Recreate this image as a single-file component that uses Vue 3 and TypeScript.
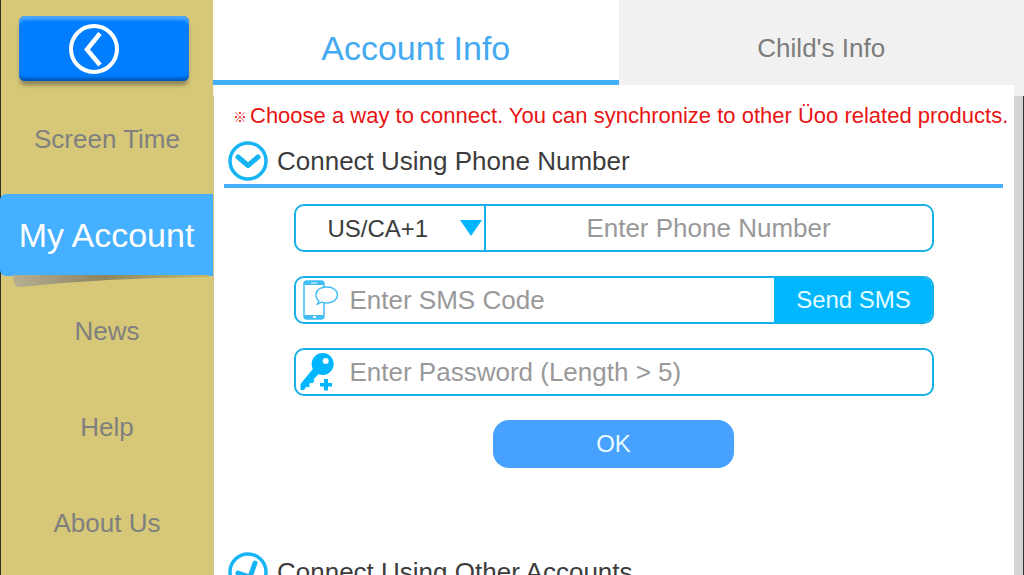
<script setup lang="ts">
import { ref } from 'vue'

const menu: string[] = ['Screen Time', 'My Account', 'News', 'Help', 'About Us']
const activeMenu = ref('My Account')

const tabs: string[] = ['Account Info', "Child's Info"]
const activeTab = ref('Account Info')

const country = ref('US/CA+1')
const phone = ref('')
const smsCode = ref('')
const password = ref('')
</script>

<template>
  <div class="app">
    <aside class="sidebar">
      <div class="back-row">
        <button class="back" type="button" aria-label="Back">
          <svg width="50" height="50" viewBox="0 0 50 50" fill="none" stroke="#fff">
            <circle cx="25" cy="25" r="23" stroke-width="4" />
            <path d="M31 9.500L18 25.500L31 41" stroke-width="4.500" />
          </svg>
        </button>
      </div>
      <nav class="menu">
        <button
          v-for="item in menu"
          :key="item"
          type="button"
          class="menu-item"
          :class="{ active: item === activeMenu }"
          @click="activeMenu = item"
        >
          <span class="menu-label">{{ item }}</span>
          <svg v-if="item === activeMenu" class="fold" viewBox="0 0 200 14" preserveAspectRatio="none">
            <defs>
              <linearGradient id="fold" x1="0" x2="1" y1="0" y2="0">
                <stop offset="0" stop-color="#b5ae90" />
                <stop offset="0.2" stop-color="#a39c7e" />
                <stop offset="0.45" stop-color="#8d8560" />
                <stop offset="1" stop-color="#c4b86f" />
              </linearGradient>
            </defs>
            <path d="M0 0H198L197 2Q90 3 8 12Q2 12 1 8Z" fill="url(#fold)" />
          </svg>
        </button>
      </nav>
    </aside>

    <main class="main">
      <header class="tabs">
        <button
          v-for="tab in tabs"
          :key="tab"
          type="button"
          class="tab"
          :class="{ active: tab === activeTab }"
          @click="activeTab = tab"
        >
          {{ tab }}
        </button>
      </header>

      <div class="body">
        <section class="sheet">
          <p class="notice"><span class="mark">※</span>Choose a way to connect. You can synchronize to other Üoo related products.</p>

          <h2 class="heading open">
            <svg width="40" height="40" viewBox="0 0 40 40" fill="none" stroke="#17b4f4">
              <circle cx="20" cy="20" r="18" stroke-width="3.500" />
              <path d="M10 16L20 24.500L30 16" stroke-width="5" stroke-linecap="round" stroke-linejoin="round" />
            </svg>
            Connect Using Phone Number
          </h2>

          <form class="form" @submit.prevent>
            <div class="field">
              <label class="country">
                <select v-model="country" aria-label="Country code">
                  <option>US/CA+1</option>
                </select>
                <svg class="caret" width="22" height="16" viewBox="0 0 22 16">
                  <path d="M0 0H22L11 16Z" fill="#00b7ff" />
                </svg>
              </label>
              <input v-model="phone" class="phone" type="tel" placeholder="Enter Phone Number" aria-label="Phone number" />
            </div>

            <div class="field">
              <label class="icon" for="sms">
                <svg width="40" height="40" viewBox="0 0 40 40">
                  <rect x="4" y="1" width="20" height="38" rx="3" fill="#fff" stroke="#42bdf5" stroke-width="1.500" />
                  <path d="M4 5V4Q4 1 7 1H21Q24 1 24 4V5Z" fill="#42bdf5" />
                  <path d="M4 35H24V36Q24 39 21 39H7Q4 39 4 36Z" fill="#42bdf5" />
                  <path d="M11 3H17" stroke="#fff" stroke-width="1" />
                  <rect x="13" y="36" width="3" height="2" fill="#fff" />
                  <path d="M19 21Q15.500 18 16 14C17 9 22 7 27 7C33 7 37.500 10.500 37.500 15C37.500 20 32 23 26.500 23Q24 23 21.500 22.200L17 24.500Z" fill="#fff" stroke="#42bdf5" stroke-width="1.400" stroke-linejoin="round" />
                </svg>
              </label>
              <input id="sms" v-model="smsCode" type="text" placeholder="Enter SMS Code" />
              <button class="send" type="button">Send SMS</button>
            </div>

            <div class="field">
              <label class="icon" for="password">
                <svg width="40" height="40" viewBox="0 0 40 40" fill="#00b7ff">
                  <path fill-rule="evenodd" d="M22.700 1A11 11 0 1 1 18.500 22.200L13.500 27.500L14.500 29L12 31.500L10.500 30.500L9 32.500L10 34L8 35.500L6.500 34.500L4 38H0.500V32L12.800 17A11 11 0 0 1 22.700 1ZM25.700 6A3 3 0 1 0 25.700 12A3 3 0 1 0 25.700 6Z" />
                  <path d="M24 27H28V31H32V34.500H28V38.500H24V34.500H20V31H24Z" />
                </svg>
              </label>
              <input id="password" v-model="password" type="password" placeholder="Enter Password (Length &gt; 5)" />
            </div>

            <button class="ok" type="submit">OK</button>
          </form>

          <h2 class="heading">
            <svg width="40" height="40" viewBox="0 0 40 40" fill="none" stroke="#17b4f4">
              <circle cx="20" cy="20" r="18" stroke-width="3.500" />
              <path d="M10 21L22 25L27 11" stroke-width="5" stroke-linecap="round" stroke-linejoin="round" />
            </svg>
            Connect Using Other Accounts
          </h2>
        </section>
      </div>
    </main>
  </div>
</template>

<style>
body {
  margin: 0;
}
</style>

<style scoped>
.app {
  display: flex;
  height: 100vh;
  overflow: hidden;
  background: #fff;
  font-family: 'Liberation Sans', Arial, sans-serif;
}
button,
input,
select {
  margin: 0;
  padding: 0;
  border: 0;
  background: none;
  font: inherit;
  color: inherit;
  box-sizing: border-box;
}
svg {
  display: block;
}
.sidebar {
  flex: 0 0 213px;
  box-sizing: border-box;
  border-left: 1px solid #33301c;
  background: #d6c878;
}
.back-row {
  height: 91px;
  box-sizing: border-box;
  padding: 16px 24px 0 18px;
}
.back {
  display: flex;
  align-items: center;
  width: 100%;
  height: 65px;
  padding: 0 0 0 50px;
  border-radius: 6px;
  background: #007eff;
  box-shadow:
    inset 0 4px 3px #4aa5fa,
    inset 0 -3px 3px #0058b8,
    inset 0 0 3px #0065cc,
    0 5px 4px -1px #8b8258;
}
.menu {
  display: flex;
  flex-direction: column;
}
.menu-item {
  position: relative;
  display: flex;
  align-items: center;
  height: 96px;
  font-size: 26px;
  color: #808080;
}
.menu-label {
  flex: 1;
  text-align: center;
}
.menu-item.active {
  margin-left: -1px;
  font-size: 34px;
  color: #fff;
}
.active .menu-label {
  line-height: 82px;
  border-radius: 6px 0 0 6px;
  background: #44b0ff;
}
.fold {
  position: absolute;
  left: 13px;
  top: 88px;
  width: 198px;
  height: 14px;
}
.main {
  flex: 1;
  min-width: 0;
  display: flex;
  flex-direction: column;
}
.tabs {
  display: flex;
  flex: 0 0 96px;
  background: #f1f1f1;
}
.tab {
  flex: 1;
  height: 96px;
  font-size: 26px;
  color: #7c7c7c;
}
.tab.active {
  height: 85px;
  padding-top: 16px;
  border-bottom: 5px solid #44b0f9;
  background: #fff;
  font-size: 34px;
  color: #44aaf0;
}
.body {
  flex: 1;
  min-height: 0;
  display: flex;
  border-left: 1px solid #cfc48a;
  border-right: 1px solid #333;
  background: #d5d5d5;
}
.sheet {
  flex: 1;
  min-width: 0;
  margin: -11px 9px 0 0;
  padding: 16px 11px 0 10px;
  background: #fff;
  overflow: hidden;
}
.notice {
  display: flex;
  align-items: center;
  margin: 0;
  padding-left: 9px;
  font-size: 22px;
  line-height: 30px;
  white-space: nowrap;
  color: #e81414;
}
.mark {
  flex: 0 0 17px;
  font-family: 'Noto Sans CJK SC', sans-serif;
  font-size: 14px;
  font-weight: 900;
}
.heading {
  display: flex;
  align-items: center;
  gap: 9px;
  margin: 0;
  padding: 10px 0 3px 4px;
  font-size: 26px;
  font-weight: normal;
  line-height: 40px;
  white-space: nowrap;
  color: #3c3c3c;
}
.heading.open {
  border-bottom: 4px solid #44b0f9;
}
.form {
  display: flex;
  flex-direction: column;
  gap: 24px;
  width: 640px;
  max-width: 100%;
  margin: 0 auto;
  padding: 16px 0 74px;
}
.field {
  display: flex;
  height: 48px;
  box-sizing: border-box;
  border: 2px solid #17b0e8;
  border-radius: 10px;
  overflow: hidden;
  font-size: 26px;
}
.field input {
  flex: 1;
  min-width: 0;
  color: #3c3c3c;
}
.field input::placeholder {
  color: #999;
  opacity: 1;
}
.country {
  display: flex;
  align-items: center;
  width: 190px;
  box-sizing: border-box;
  padding-right: 2px;
  border-right: 2px solid #17b0e8;
}
.country select {
  flex: 1;
  min-width: 0;
  height: 100%;
  padding-left: 32px;
  appearance: none;
  font-size: 24px;
  color: #3c3c3c;
}
.field .phone {
  text-align: center;
}
.icon {
  display: flex;
  align-items: center;
  width: 54px;
  box-sizing: border-box;
  padding-left: 4px;
}
.send {
  width: 160px;
  margin: -2px;
  background: #00b7ff;
  font-size: 24px;
  color: #e4fbff;
}
.ok {
  align-self: center;
  width: 241px;
  height: 48px;
  border-radius: 16px;
  background: #47a1ff;
  font-size: 24px;
  color: #e8fbff;
}
</style>
